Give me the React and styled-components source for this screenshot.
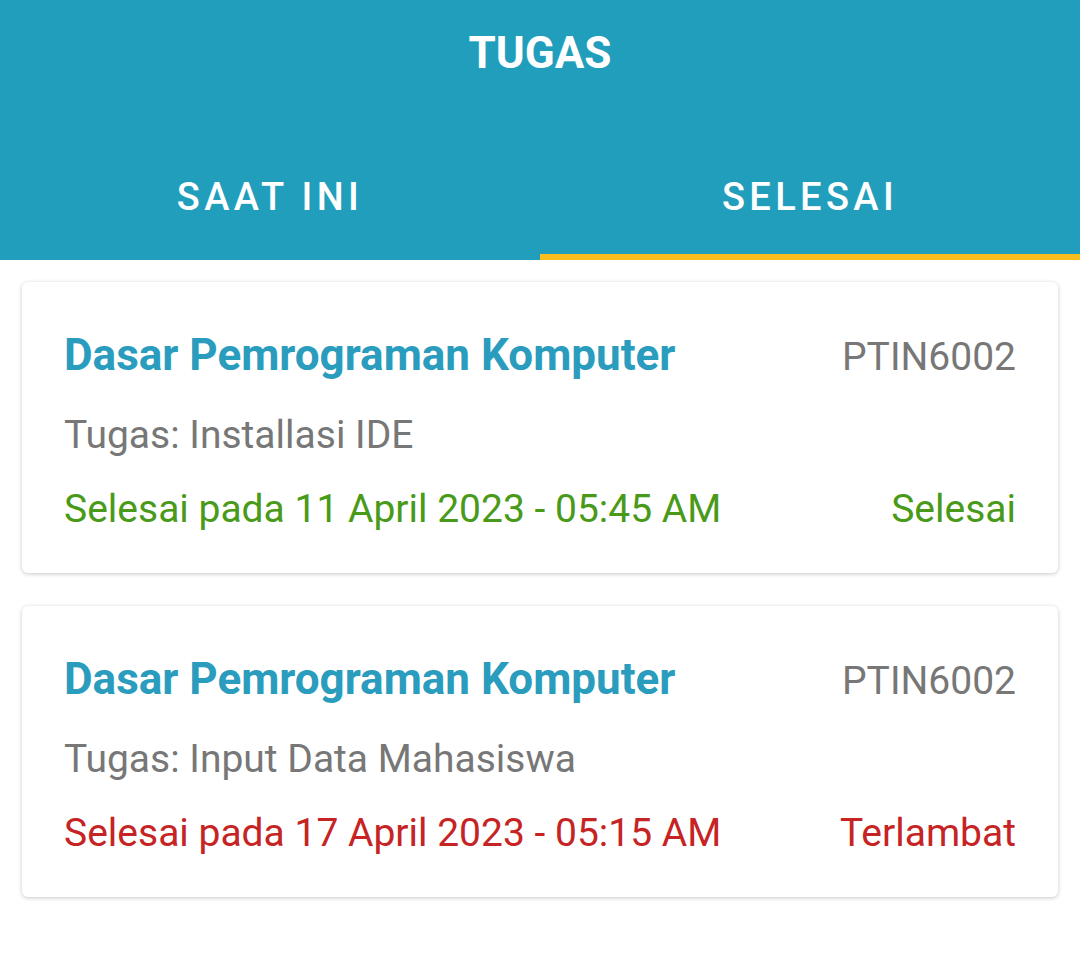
import React from 'react';
import styled, { createGlobalStyle } from 'styled-components';

const GlobalStyle = createGlobalStyle`
    body {
        margin: 0;
        background: #fff;
        font-family: Roboto, "Noto Sans", sans-serif;
    }
`;

const tasks = [
    {
        course: 'Dasar Pemrograman Komputer',
        code: 'PTIN6002',
        task: 'Tugas: Installasi IDE',
        done: 'Selesai pada 11 April 2023 - 05:45 AM',
        status: 'Selesai',
        late: false,
    },
    {
        course: 'Dasar Pemrograman Komputer',
        code: 'PTIN6002',
        task: 'Tugas: Input Data Mahasiswa',
        done: 'Selesai pada 17 April 2023 - 05:15 AM',
        status: 'Terlambat',
        late: true,
    },
];

const App = () => {
    return (
        <>
            <GlobalStyle />
            <Header>
                <Title>TUGAS</Title>
                <Tabs>
                    <Tab>SAAT INI</Tab>
                    <Tab active>SELESAI</Tab>
                </Tabs>
            </Header>
            <List>
                {tasks.map((t, i) => (
                    <Card key={i}>
                        <TopRow>
                            <Course>{t.course}</Course>
                            <Code>{t.code}</Code>
                        </TopRow>
                        <TaskName>{t.task}</TaskName>
                        <BottomRow late={t.late}>
                            <span>{t.done}</span>
                            <span>{t.status}</span>
                        </BottomRow>
                    </Card>
                ))}
            </List>
        </>
    );
};

const Header = styled.div`
    background: #219ebc;
    color: #fff;
`;
const Title = styled.div`
    height: 126px;
    box-sizing: border-box;
    padding-top: 28px;
    text-align: center;
    font-size: 44px;
    line-height: 50px;
    font-weight: 700;
`;
const Tabs = styled.div`
    display: flex;
`;
const Tab = styled.div`
    flex: 1;
    height: 134px;
    box-sizing: border-box;
    padding-top: 49px;
    text-align: center;
    font-size: 38px;
    line-height: 44px;
    font-weight: 500;
    letter-spacing: 4.4px;
    border-bottom: 6px solid ${(props) => (props.active ? '#f9bd1f' : 'transparent')};
`;
const List = styled.div`
    display: flex;
    flex-direction: column;
    gap: 33px;
    padding: 22px 22px;
`;
const Card = styled.div`
    background: #fff;
    border-radius: 6px;
    box-shadow: 0 1px 4px rgba(0, 0, 0, 0.22);
    padding: 47px 42px 38px;
`;
const TopRow = styled.div`
    display: flex;
    justify-content: space-between;
    align-items: baseline;
`;
const Course = styled.div`
    color: #2a9cbd;
    font-size: 44px;
    line-height: 52px;
    font-weight: 700;
`;
const Code = styled.div`
    color: #777;
    font-size: 39px;
    line-height: 52px;
`;
const TaskName = styled.div`
    margin-top: 26px;
    color: #777;
    font-size: 39px;
    line-height: 52px;
`;
const BottomRow = styled.div`
    margin-top: 22px;
    display: flex;
    justify-content: space-between;
    color: ${(props) => (props.late ? '#c62424' : '#4a9a1a')};
    font-size: 39px;
    line-height: 52px;
`;

export default App;
